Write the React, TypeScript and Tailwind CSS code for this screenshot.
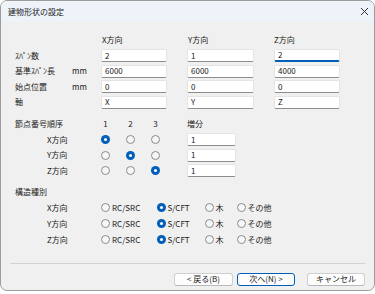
import React from "react";

const FONT = "font-['Noto_Sans_CJK_JP','Noto_Sans',sans-serif]";

function Radio({ on }: { on?: boolean }) {
  return on ? (
    <span className="w-[9px] h-[9px] rounded-full bg-[#005fb8] flex items-center justify-center shrink-0">
      <span className="w-[3px] h-[3px] rounded-full bg-white" />
    </span>
  ) : (
    <span className="w-[9px] h-[9px] rounded-full border border-[#8b8b8b] bg-[#f6f6f6] shrink-0" />
  );
}

function Field({ v, w, focus }: { v: string; w: string; focus?: boolean }) {
  return (
    <div
      className={
        focus
          ? `${w} h-[13px] bg-white border border-[#e4e4e4] border-b-[2px] border-b-[#005fb8] rounded-[2px] pl-[3px] flex items-center text-[8px] leading-none text-[#1a1a1a]`
          : `${w} h-[13px] bg-white border border-[#e4e4e4] border-b-[#8d8d8d] rounded-[2px] pl-[3px] flex items-center text-[8px] leading-none text-[#1a1a1a]`
      }
    >
      {v}
    </div>
  );
}

function InputRow({ label, unit, vals, focusZ }: { label: string; unit?: string; vals: string[]; focusZ?: boolean }) {
  return (
    <div className="flex items-center h-[13px]">
      <div className="w-[86px] flex items-center">
        <span className="w-[57px]">{label}</span>
        {unit && <span>{unit}</span>}
      </div>
      <div className="flex gap-[20px]">
        <Field v={vals[0]} w="w-[66px]" />
        <Field v={vals[1]} w="w-[67px]" />
        <Field v={vals[2]} w="w-[66px]" focus={focusZ} />
      </div>
    </div>
  );
}

function NodeRow({ label, sel, inc }: { label: string; sel: number; inc: string }) {
  return (
    <div className="flex items-center h-[13px]">
      <span className="w-[78px] pl-[32px]">{label}</span>
      {[0, 1, 2].map((i) => (
        <span key={i} className="w-[25px] flex justify-center">
          <Radio on={sel === i} />
        </span>
      ))}
      <span className="w-[19px]" />
      <Field v={inc} w="w-[49px]" />
    </div>
  );
}

function StructRow({ label }: { label: string }) {
  return (
    <div className="flex items-center h-[13px]">
      <span className="w-[86px] pl-[32px]">{label}</span>
      <span className="w-[55.5px] flex items-center gap-[2px]">
        <Radio />
        <span>RC/SRC</span>
      </span>
      <span className="w-[48px] flex items-center gap-[2px]">
        <Radio on />
        <span>S/CFT</span>
      </span>
      <span className="w-[32px] flex items-center gap-[2px]">
        <Radio />
        <span>木</span>
      </span>
      <span className="flex items-center gap-[2px]">
        <Radio />
        <span>その他</span>
      </span>
    </div>
  );
}

function Btn({ children, primary, w }: { children: React.ReactNode; primary?: boolean; w: string }) {
  return (
    <div
      className={
        primary
          ? `${w} h-[13px] rounded-[3px] bg-[#fdfdfd] border border-[#005fb8] flex items-center justify-center text-[8px] leading-none`
          : `${w} h-[13px] rounded-[3px] bg-[#fdfdfd] border border-[#d0d0d0] border-b-[#b8b8b8] flex items-center justify-center text-[8px] leading-none`
      }
    >
      {children}
    </div>
  );
}

export default function App() {
  return (
    <div className={`w-[375px] h-[294px] bg-white ${FONT} text-[8px] leading-none text-[#1a1a1a]`}>
      <div className="w-[375px] h-[291px] border border-[#9c9c9c] rounded-[7px] overflow-hidden bg-[#f0f0f0] flex flex-col">
        <div className="h-[21px] bg-[#eef3fa] flex items-center justify-between pl-[7px] pr-[5px] shrink-0">
          <span className="text-[8px]">建物形状の設定</span>
          <svg width="9" height="9" viewBox="0 0 9 9">
            <path d="M1 1 L8 8 M8 1 L1 8" stroke="#333" strokeWidth="1" />
          </svg>
        </div>

        <div className="pl-[14px] flex flex-col">
          {/* header */}
          <div className="flex items-center h-[12px] mt-[12px]">
            <span className="w-[87px]" />
            <span className="w-[86px]">X方向</span>
            <span className="w-[86px]">Y方向</span>
            <span>Z方向</span>
          </div>
          <div className="flex flex-col gap-[2.6px] mt-[3px]">
            <InputRow label="ｽﾊﾟﾝ数" vals={["2", "1", "2"]} focusZ />
            <InputRow label="基準ｽﾊﾟﾝ長" unit="mm" vals={["6000", "6000", "4000"]} />
            <InputRow label="始点位置" unit="mm" vals={["0", "0", "0"]} />
            <InputRow label="軸" vals={["X", "Y", "Z"]} />
          </div>

          {/* node order */}
          <div className="flex items-center h-[12px] mt-[9.2px]">
            <span className="w-[78px]">節点番号順序</span>
            <span className="w-[25px] text-center">1</span>
            <span className="w-[25px] text-center">2</span>
            <span className="w-[25px] text-center">3</span>
            <span className="w-[19px]" />
            <span>増分</span>
          </div>
          <div className="flex flex-col gap-[2.5px] mt-[3.5px]">
            <NodeRow label="X方向" sel={0} inc="1" />
            <NodeRow label="Y方向" sel={1} inc="1" />
            <NodeRow label="Z方向" sel={2} inc="1" />
          </div>

          {/* structure type */}
          <div className="flex items-center h-[12px] mt-[8.5px]">
            <span>構造種別</span>
          </div>
          <div className="flex flex-col gap-[3px] mt-[3.5px]">
            <StructRow label="X方向" />
            <StructRow label="Y方向" />
            <StructRow label="Z方向" />
          </div>
        </div>

        <div className="mx-[9px] mt-[16.5px] h-px bg-[#d2d2d2]" />

        <div className="flex justify-end mt-[9px] mr-[9px]">
          <Btn w="w-[59px]">&lt; 戻る(B)</Btn>
          <span className="w-[4px]" />
          <Btn w="w-[58px]" primary>次へ(N) &gt;</Btn>
          <span className="w-[12px]" />
          <Btn w="w-[58px]">キャンセル</Btn>
        </div>
      </div>
    </div>
  );
}
